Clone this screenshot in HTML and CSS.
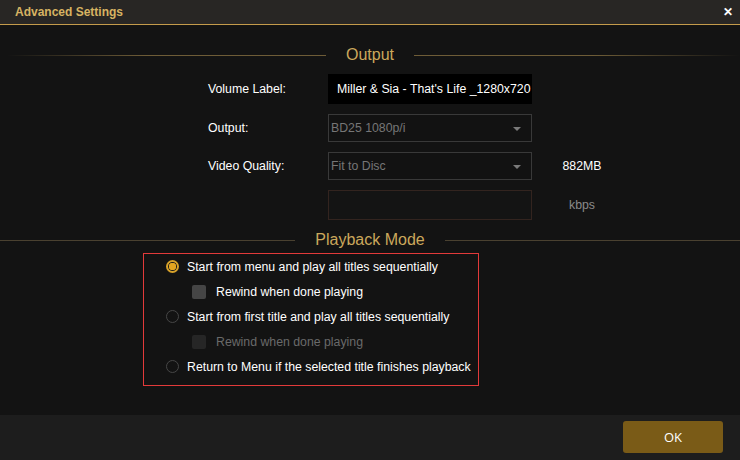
FILE: index.html
```html
<!DOCTYPE html>
<html lang="en">
<head>
    <meta charset="UTF-8">
    <title>Advanced Settings</title>
    <link rel="stylesheet" href="styles.css">
</head>
<body>

<div class="dialog">
    <div class="titlebar">
        <span class="title">Advanced Settings</span>
        <span class="close">&#x2715;</span>
    </div>

    <div class="content">
        <div class="section-title">
            <span class="line left"></span>
            <span class="heading">Output</span>
            <span class="line right"></span>
        </div>

        <div class="form">
            <label class="field-label">Volume Label:</label>
            <div class="text-input dark">Miller &amp; Sia - That's Life _1280x720</div>
            <span></span>

            <label class="field-label">Output:</label>
            <div class="select">BD25 1080p/i<span class="arrow"></span></div>
            <span></span>

            <label class="field-label">Video Quality:</label>
            <div class="select">Fit to Disc<span class="arrow"></span></div>
            <span class="extra">882MB</span>

            <span></span>
            <div class="text-input empty"></div>
            <span class="extra muted">kbps</span>
        </div>

        <div class="section-title playback">
            <span class="line left"></span>
            <span class="heading">Playback Mode</span>
            <span class="line right"></span>
        </div>

        <div class="options">
            <div class="option">
                <span class="radio checked"></span>
                <span>Start from menu and play all titles sequentially</span>
            </div>
            <div class="option sub">
                <span class="checkbox"></span>
                <span>Rewind when done playing</span>
            </div>
            <div class="option">
                <span class="radio"></span>
                <span>Start from first title and play all titles sequentially</span>
            </div>
            <div class="option sub disabled">
                <span class="checkbox"></span>
                <span>Rewind when done playing</span>
            </div>
            <div class="option">
                <span class="radio"></span>
                <span>Return to Menu if the selected title finishes playback</span>
            </div>
        </div>
    </div>

    <div class="footer">
        <button class="ok-button">OK</button>
    </div>
</div>

</body>
</html>
```

FILE: styles.css
```css
body {
    margin: 0;
    font-family: "Liberation Sans", Arial, sans-serif;
    font-size: 12.3px;
    background-color: #131313;
    color: #fff;
}
.dialog {
    width: 740px;
    height: 460px;
    display: flex;
    flex-direction: column;
    overflow: hidden;
}
.titlebar {
    height: 24px;
    background-color: #282624;
    border-bottom: 1px solid #c49b4b;
    display: flex;
    align-items: center;
    justify-content: space-between;
    padding: 0 7px 0 15px;
}
.title {
    color: #d7b362;
    font-weight: bold;
    font-size: 12px;
}
.close {
    color: #fff;
    font-weight: bold;
    font-size: 12px;
}
.content {
    flex: 1;
    background-color: #131313;
    padding-top: 21px;
}

/* Section headings with lines */
.section-title {
    display: flex;
    align-items: center;
    height: 18px;
}
.section-title .heading {
    color: #cba85c;
    font-size: 16px;
    padding: 0 20px;
}
.section-title .line {
    flex: 1;
    height: 1px;
}
.line.left {
    background: linear-gradient(to right, rgba(110, 92, 55, 0) 2%, #6e5c37 45%);
}
.line.right {
    background: linear-gradient(to right, #6e5c37 55%, rgba(110, 92, 55, 0));
}
.playback {
    margin-top: 11px;
}
.playback .line.left,
.playback .line.right {
    background: #4a4130;
}

/* Output form */
.form {
    display: grid;
    grid-template-columns: 120px 204px 80px;
    row-gap: 10px;
    margin: 10px 0 0 208px;
    align-items: center;
}
.field-label {
    color: #fff;
}
.text-input {
    height: 30px;
    box-sizing: border-box;
    display: flex;
    align-items: center;
}
.text-input.dark {
    background-color: #000;
    color: #fff;
    padding-left: 9px;
    white-space: nowrap;
    overflow: hidden;
}
.text-input.empty {
    border: 1px solid #33241f;
    background-color: #141414;
}
.select {
    height: 28px;
    box-sizing: border-box;
    border: 1px solid #393939;
    background-color: #121212;
    color: #767676;
    padding: 0 2px;
    display: flex;
    align-items: center;
    position: relative;
}
.select .arrow {
    position: absolute;
    right: 10px;
    top: 12px;
    border-left: 4px solid transparent;
    border-right: 4px solid transparent;
    border-top: 4px solid #7a7a7a;
}
.extra {
    padding-left: 20px;
    text-align: center;
    color: #fff;
}
.extra.muted {
    color: #8a8a8a;
}

/* Playback options */
.options {
    width: 312px;
    margin: 4px 0 0 143px;
    border: 1px solid #e23a3a;
    padding: 0 0 6px 22px;
}
.option {
    height: 25px;
    display: flex;
    align-items: center;
    color: #fff;
}
.option.sub {
    padding-left: 26px;
}
.option.disabled {
    color: #6a6a6a;
}
.radio {
    width: 11px;
    height: 11px;
    border: 1px solid #474747;
    border-radius: 50%;
    margin-right: 8px;
}
.radio.checked {
    border: 2px solid #d8a22a;
    width: 9px;
    height: 9px;
    background: radial-gradient(circle, #e3a520 0 3.5px, #1a1a1a 4px);
}
.checkbox {
    width: 14px;
    height: 14px;
    background-color: #454545;
    border-radius: 2px;
    margin-right: 10px;
}
.option.disabled .checkbox {
    background-color: #262626;
}

/* Footer */
.footer {
    height: 45px;
    background-color: #1d1d1d;
    display: flex;
    justify-content: flex-end;
    align-items: flex-start;
    padding: 6px 17px 0 0;
    box-sizing: border-box;
}
.ok-button {
    width: 100px;
    height: 32px;
    background-color: #7a5b17;
    border: none;
    border-radius: 3px;
    color: #fff;
    font-family: "Open Sans", sans-serif;
    font-size: 13px;
}
```
